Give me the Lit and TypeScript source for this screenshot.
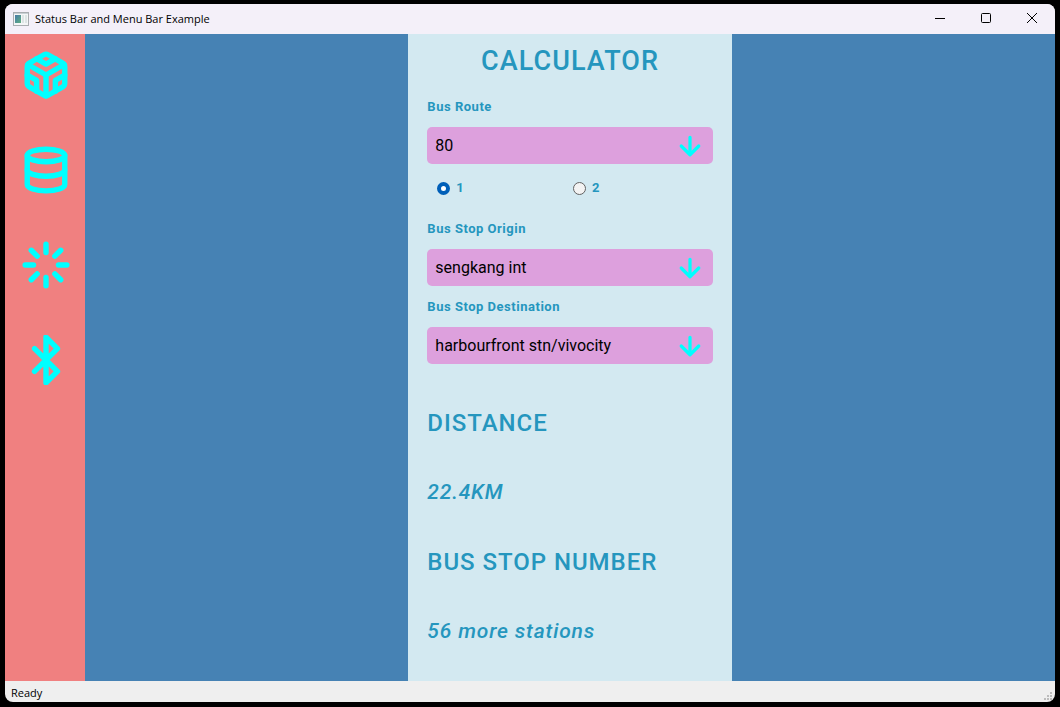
import { LitElement, html, css, svg } from "lit";
import { customElement, property, state } from "lit/decorators.js";

const icons = {
  sandbox: svg`<path d="M21 16V8a2 2 0 0 0-1-1.73l-7-4a2 2 0 0 0-2 0l-7 4A2 2 0 0 0 3 8v8a2 2 0 0 0 1 1.73l7 4a2 2 0 0 0 2 0l7-4A2 2 0 0 0 21 16z"/><polyline points="7.5 4.21 12 6.81 16.5 4.21"/><polyline points="7.5 19.79 7.5 14.6 3 12"/><polyline points="21 12 16.5 14.6 16.5 19.79"/><polyline points="3.27 6.96 12 12.01 20.73 6.96"/><line x1="12" y1="22.08" x2="12" y2="12"/>`,
  database: svg`<ellipse cx="12" cy="5" rx="9" ry="3"/><path d="M21 12c0 1.66-4 3-9 3s-9-1.34-9-3"/><path d="M3 5v14c0 1.66 4 3 9 3s9-1.34 9-3V5"/>`,
  loader: svg`<path d="M12 2v4M12 18v4M4.93 4.93l2.83 2.83M16.24 16.24l2.83 2.83M2 12h4M18 12h4M4.93 19.07l2.83-2.83M16.24 7.76l2.83-2.83"/>`,
  bluetooth: svg`<polyline points="6.5 6.5 17.5 17.5 12 23 12 1 17.5 6.5 6.5 17.5"/>`,
};

@customElement("tool-bar")
class ToolBar extends LitElement {
  static styles = css`
    :host { display: block; background: #f08080; }
    .tools { display: flex; flex-direction: column; gap: 45px; padding: 16px; }
    .tool { width: 50px; height: 50px; padding: 0; border: 0; background: none; color: #00ffff; }
    .glyph { display: block; width: 50px; height: 50px; overflow: hidden; fill: none; stroke: currentColor;
      stroke-width: 2.6; stroke-linecap: round; stroke-linejoin: round; }
  `;
  render() {
    const tools = [
      ["Calculator", icons.sandbox],
      ["Data", icons.database],
      ["Refresh", icons.loader],
      ["Bluetooth", icons.bluetooth],
    ];
    return html`<nav class="tools">
      ${tools.map(([name, glyph]) => html`<button class="tool" aria-label=${name as string}>
        <svg class="glyph" viewBox="0 0 24 24">${glyph}</svg>
      </button>`)}
    </nav>`;
  }
}

@customElement("select-field")
class SelectField extends LitElement {
  @property() label = "";
  @property({ type: Array }) options: string[] = [];
  static styles = css`
    :host { display: flex; flex-direction: column; gap: 12px; }
    .label { font-size: 13px; line-height: 16px; font-weight: 700; color: #2596be; }
    .box { display: grid; align-items: center; }
    .select { grid-area: 1 / 1; appearance: none; width: 100%; height: 37px; padding: 0 44px 0 8px; border: 0;
      border-radius: 5px; background: #dda0dd; color: #000; font: 16px Roboto, sans-serif; }
    .arrow { grid-area: 1 / 1; justify-self: end; width: 30px; height: 30px; margin-right: 8px; pointer-events: none;
      fill: none; stroke: #00ffff; stroke-width: 2.6; stroke-linecap: round; stroke-linejoin: round; }
  `;
  render() {
    return html`
      <label class="label" for="choice">${this.label}</label>
      <div class="box">
        <select class="select" id="choice">${this.options.map((o) => html`<option>${o}</option>`)}</select>
        <svg class="arrow" viewBox="0 0 24 24"><path d="M12 5v14M19 12l-7 7-7-7"/></svg>
      </div>`;
  }
}

@customElement("route-calculator")
class RouteCalculator extends LitElement {
  @state() direction = "1";
  static styles = css`
    :host { display: flex; flex-direction: column; padding: 11px 19px 10px; background: #d3e9f1; color: #2596be;
      font-family: Roboto, sans-serif; }
    .title, .field, .direction, .heading, .value { letter-spacing: 0.04em; }
    .field { font-size: 13px; }
    .title { margin: 0 0 22px; font-size: 27px; line-height: 32px; font-weight: 500; text-align: center; }
    .directions { display: grid; grid-template-columns: 1fr 1fr; margin: 16px 0 25px; padding: 0 9px 0 5px; border: 0; }
    .direction { display: flex; align-items: center; gap: 6px; padding-left: 5px; font-size: 13px; line-height: 16px; font-weight: 700; }
    .radio { appearance: none; box-sizing: border-box; width: 13px; height: 13px; margin: 0; border: 1px solid #626262;
      border-radius: 50%; background: #f3f3f3; }
    .radio:checked { border: 4px solid #005fb8; background: #fff; }
    .fields { display: flex; flex-direction: column; gap: 13px; }
    .results { display: flex; flex-direction: column; gap: 38px; margin: 43px 0 0; }
    .heading { margin: 0; font-size: 24px; line-height: 32px; font-weight: 500; }
    .value { margin: 0; font-size: 21px; line-height: 31px; font-weight: 500; font-style: italic; }
  `;
  render() {
    return html`
      <h1 class="title">CALCULATOR</h1>
      <select-field class="field" label="Bus Route" .options=${["80"]}></select-field>
      <fieldset class="directions" aria-label="Direction">
        ${["1", "2"].map((d) => html`<label class="direction">
          <input class="radio" type="radio" name="direction" value=${d} .checked=${this.direction === d}
            @change=${() => (this.direction = d)}>${d}</label>`)}
      </fieldset>
      <div class="fields">
        <select-field class="field" label="Bus Stop Origin" .options=${["sengkang int"]}></select-field>
        <select-field class="field" label="Bus Stop Destination" .options=${["harbourfront stn/vivocity"]}></select-field>
      </div>
      <section class="results">
        <h2 class="heading">DISTANCE</h2>
        <p class="value">22.4KM</p>
        <h2 class="heading">BUS STOP NUMBER</h2>
        <p class="value">56 more stations</p>
      </section>`;
  }
}

@customElement("app-root")
class AppRoot extends LitElement {
  static styles = css`
    :host { display: flex; box-sizing: border-box; min-height: 100vh; padding: 4px 5px 5px; background: #000;
      font-family: "Open Sans", "Noto Sans", sans-serif; font-size: 11px; color: #000; }
    .window { flex: 1; min-width: 0; display: flex; flex-direction: column; border-radius: 8px; overflow: hidden; background: #efefef; }
    .titlebar { display: flex; align-items: center; height: 30px; padding-left: 8px; background: #f4f0f9; }
    .app-icon { width: 16px; height: 14px; margin-right: 6px; }
    .caption { flex: 1; line-height: 16px; }
    .control { display: flex; align-items: center; justify-content: center; width: 46px; height: 30px; padding: 0 0 2px; border: 0; background: none; }
    .mark { width: 12px; height: 12px; fill: none; stroke: #000; }
    .body { flex: 1; display: flex; }
    .side { flex: none; width: 80px; }
    .content { flex: 1; display: grid; grid-template-columns: 1fr 1fr 1fr; background: #4682b4; }
    .calc { grid-column: 2; }
    .status { display: flex; justify-content: space-between; padding: 4px 2px 1px 6px; line-height: 16px; }
    .grip { align-self: flex-end; width: 10px; height: 10px; fill: #bcbcbc; }
  `;
  render() {
    return html`<div class="window">
      <header class="titlebar">
        <svg class="app-icon" viewBox="0 0 16 14">
          <defs><linearGradient id="g" x1="0" y1="0" x2="1" y2="1"><stop offset="0" stop-color="#4779a8"/><stop offset="1" stop-color="#5fb082"/></linearGradient></defs>
          <rect x=".5" y=".5" width="15" height="13" fill="#f4f6f7" stroke="#a9adb1"/>
          <rect x="1" y="1" width="14" height="1" fill="#c9d0d5"/>
          <rect x="2" y="3" width="6" height="8" fill="url(#g)"/>
          <rect x="9" y="3" width="2" height="8" fill="#dde5e5"/>
          <rect x="12" y="3" width="2" height="8" fill="#dde5e5"/>
        </svg>
        <span class="caption">Status Bar and Menu Bar Example</span>
        <button class="control" aria-label="Minimize"><svg class="mark" viewBox="0 0 12 12"><path d="M1 6.5h10"/></svg></button>
        <button class="control" aria-label="Maximize"><svg class="mark" viewBox="0 0 12 12"><rect x="1.5" y="1.5" width="9" height="9" rx="1"/></svg></button>
        <button class="control" aria-label="Close"><svg class="mark" viewBox="0 0 12 12"><path d="M1 1l10 10M11 1L1 11"/></svg></button>
      </header>
      <main class="body">
        <tool-bar class="side"></tool-bar>
        <div class="content"><route-calculator class="calc"></route-calculator></div>
      </main>
      <footer class="status">
        <span>Ready</span>
        <svg class="grip" viewBox="0 0 10 10"><path d="M7 1h2v2H7zM4 4h2v2H4zM7 4h2v2H7zM1 7h2v2H1zM4 7h2v2H4zM7 7h2v2H7z"/></svg>
      </footer>
    </div>`;
  }
}
